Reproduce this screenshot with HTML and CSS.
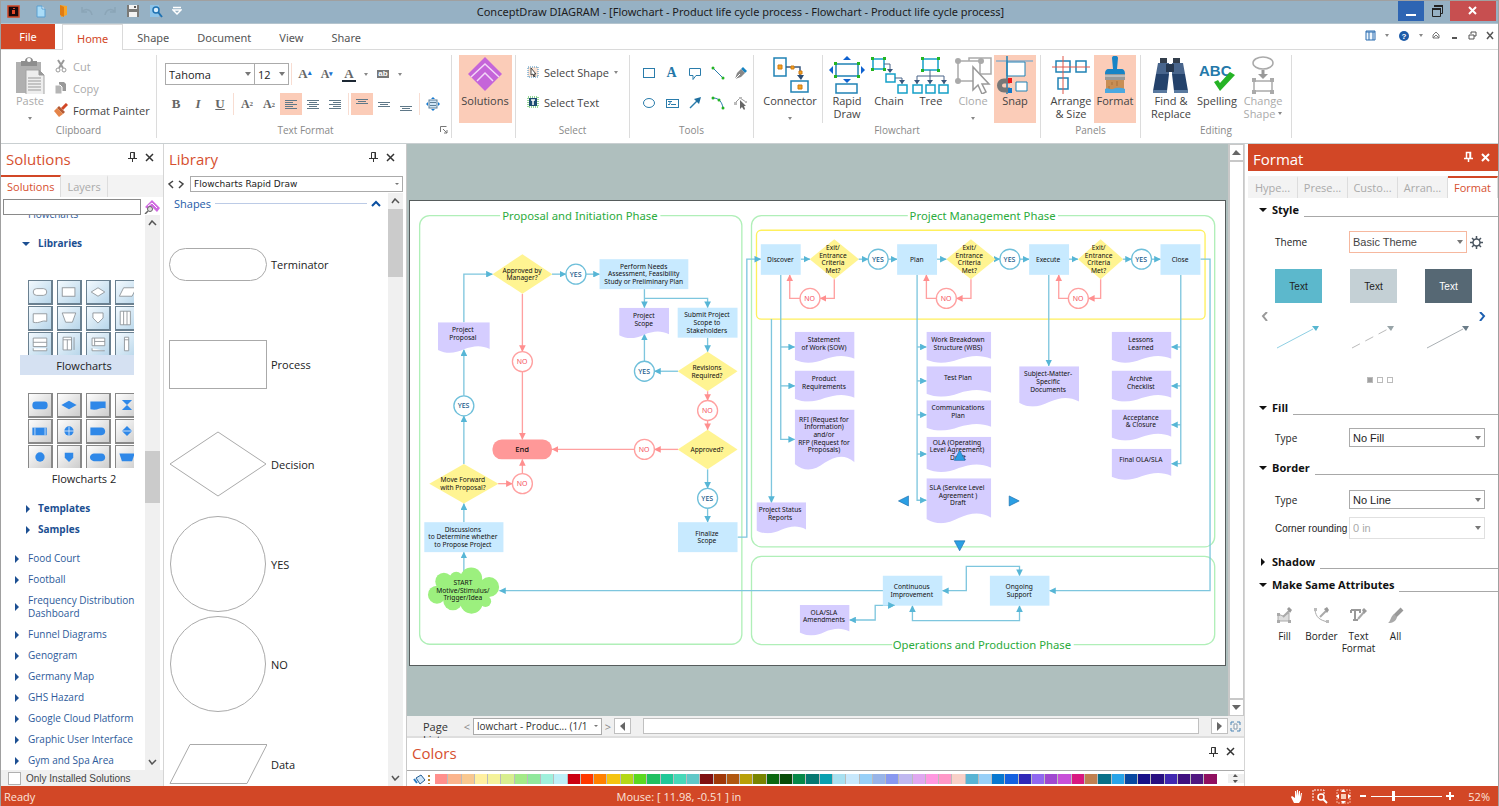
FILE: index.html
```
<!DOCTYPE html>
<html lang="en">
<head>
  <meta charset="UTF-8">
  <title>ConceptDraw DIAGRAM</title>
  <link rel="stylesheet" href="styles.css">
</head>
<body>
<div class="window">

  <!-- title bar -->
  <header class="titlebar">
    <div class="quick">
      <svg width="13" height="13"><rect x="1" y="1" width="11" height="11" fill="#1a0a0c" stroke="#d24726" stroke-width="1.5"/><path d="M5 5h3v4H5zM6 3h2v1H6z" fill="#e0482a"/></svg>
      <button aria-label="New"><svg width="14" height="14"><path d="M3 2h5l3 3v8H3z" fill="#a9dcf8" stroke="#5b9fd0"/><path d="M8 2v3h3" fill="#fff" stroke="#5b9fd0"/></svg></button>
      <button aria-label="Open"><svg width="14" height="14"><path d="M3 1l7 1v9l-6 2z" fill="#f7a428"/><path d="M3 1l4 2v10l-4-2z" fill="#e07b12"/></svg></button>
      <button aria-label="Undo"><svg width="14" height="14"><path d="M2 3v5h5M2 8c3-4 9-3 10 3" fill="none" stroke="#8ba5b7" stroke-width="1.5"/></svg></button>
      <button aria-label="Redo"><svg width="14" height="14"><path d="M12 3v5H7M12 8C9 4 3 5 2 11" fill="none" stroke="#8ba5b7" stroke-width="1.5"/></svg></button>
      <button aria-label="Save"><svg width="14" height="14"><path d="M1 1h12v12H1z" fill="#7a7a78"/><path d="M3 1h8v4H3zM3 8h8v5H3z" fill="#f3f3f3"/><path d="M8 2h2v2H8z" fill="#555"/></svg></button>
      <button aria-label="Preview"><svg width="14" height="14"><path d="M1 1h9v12H1z" fill="#8fc4e8"/><circle cx="7" cy="6" r="3" fill="#d7efff" stroke="#1f72b2" stroke-width="1.5"/><path d="M9 8l4 5" stroke="#1f72b2" stroke-width="2"/></svg></button>
      <button class="more" aria-label="Customize"><svg width="10" height="10"><path d="M1 1.5h8" stroke="#fff" stroke-width="1.5"/><path d="M1 4h8l-4 4z" fill="none" stroke="#fff" stroke-width="1.5"/></svg></button>
    </div>
    <h1>ConceptDraw DIAGRAM - [Flowchart - Product life cycle process - Flowchart - Product life cycle process]</h1>
    <div class="win-buttons">
      <button class="min" aria-label="Minimize"><svg width="12" height="12"><path d="M1 10h10" stroke="#fff" stroke-width="2"/></svg></button>
      <button class="restore" aria-label="Restore"><svg width="13" height="14"><path d="M3.5 3V1.5h8v8H10M1.500 4.500h8v8h-8z" fill="none" stroke="#222"/><path d="M1 5h9M3 2h9" stroke="#222" stroke-width="2"/></svg></button>
      <button class="close" aria-label="Close"><svg width="10" height="10"><path d="M1 1l7 7M8 1L1 8" stroke="#fff" stroke-width="2"/></svg></button>
    </div>
  </header>

  <!-- ribbon tabs -->
  <nav class="tabs">
    <button class="tab file">File</button>
    <button class="tab active">Home</button>
    <button class="tab">Shape</button>
    <button class="tab">Document</button>
    <button class="tab">View</button>
    <button class="tab">Share</button>
    <div class="tab-tools">
      <button aria-label="Layout"><svg width="11" height="11"><path d="M1 1h9v9H1z" fill="#eef6fd" stroke="#2b6cb0"/><path d="M1 2h9M4 2v8M8 2v8" stroke="#2b6cb0"/></svg></button>
      <i class="caret"></i>
      <button aria-label="Help"><svg width="12" height="12"><circle cx="6" cy="6" r="5" fill="#1c5ba8"/><text x="6" y="9" class="q">?</text></svg></button>
      <i class="caret"></i>
      <button aria-label="Collapse ribbon"><svg width="9" height="9"><path d="M1 4l3-3 3 3M1 7l3-3 3 3zM1 4v3M7 4v3" fill="none" stroke="#777"/></svg></button>
      <button aria-label="Minimize document"><svg width="9" height="9"><path d="M2 7h5" stroke="#555" stroke-width="2"/></svg></button>
      <button aria-label="Restore document"><svg width="9" height="9"><path d="M3 3V1h5v4H6M1 4h5v4H1z" fill="none" stroke="#555"/></svg></button>
      <button aria-label="Close document"><svg width="9" height="9"><path d="M1 1l6 7M7 1L1 8" stroke="#555" stroke-width="1.5"/></svg></button>
    </div>
  </nav>

  <!-- ribbon -->
  <section class="ribbon">
    <div class="group">
      <div class="group-body clipboard">
        <button class="big off"><svg width="34" height="40"><path d="M3 6h25v31H3z" fill="#b0b0b0"/><path d="M8 10V5h4c0-5 8-5 8 0h4v5z" fill="#8e8e8e"/><circle cx="16" cy="4" r="2" fill="#fff"/><path d="M13 14h13l5 5v20H13z" fill="#eee" stroke="#a5a5a5"/><path d="M26 14v5h5zM15 22h13M15 25h13M15 28h13M15 31h13M15 34h13" stroke="#999" fill="#999"/></svg>Paste<i class="caret"></i></button>
        <div class="stack">
          <button class="small off"><svg width="14" height="14"><path d="M4 1l5 8M10 1L5 9" stroke="#999" stroke-width="2"/><circle cx="4" cy="11" r="2" fill="none" stroke="#999"/><circle cx="10" cy="11" r="2" fill="none" stroke="#999"/></svg>Cut</button>
          <button class="small off"><svg width="14" height="14"><path d="M5 1h5l2 2v7H5z" fill="#999"/><path d="M1 4h5l2 2v7H1z" fill="#b5b5b5" stroke="#fff"/></svg>Copy</button>
          <button class="small"><svg width="14" height="14"><path d="M13 1L8 6" stroke="#d24726" stroke-width="3"/><path d="M5 3l6 6-2 2-6-6z" fill="#b45a35"/><path d="M3 5l6 6-4 3-5-6z" fill="#e58448"/></svg>Format Painter</button>
        </div>
      </div>
      <div class="group-name">Clipboard</div>
    </div>

    <div class="group">
      <div class="group-body text-format">
        <div class="row">
          <span class="drop font-name"><select aria-label="Font"><option>Tahoma</option></select></span>
          <span class="drop font-size"><select aria-label="Font size"><option>12</option></select></span>
          <i class="bar"></i>
          <button class="glyph serif" aria-label="Grow font">A<sup class="tick">▴</sup></button>
          <button class="glyph serif smaller" aria-label="Shrink font">A<sup class="tick">▾</sup></button>
          <button class="glyph serif colored" aria-label="Font color"><span>A</span></button>
          <i class="caret"></i>
          <button class="glyph" aria-label="Highlight"><span class="ab">ab</span></button>
          <i class="caret"></i>
        </div>
        <div class="row">
          <button class="glyph serif">B</button>
          <button class="glyph serif italic">I</button>
          <button class="glyph serif underline">U</button>
          <i class="bar"></i>
          <button class="glyph serif script">A<sup>2</sup></button>
          <button class="glyph serif script">A<sub>2</sub></button>
          <button class="glyph on" aria-label="Align left"><svg width="13" height="11"><path d="M0 1.5h12M0 3.5h8M0 5.5h12M0 7.5h8M0 9.5h12" stroke="#5f7888"/></svg></button>
          <button class="glyph" aria-label="Align center"><svg width="13" height="11"><path d="M0 1.5h12M2 3.5h8M0 5.5h12M2 7.5h8M0 9.5h12" stroke="#5f7888"/></svg></button>
          <button class="glyph" aria-label="Align right"><svg width="13" height="11"><path d="M0 1.5h12M4 3.5h8M0 5.5h12M4 7.5h8M0 9.5h12" stroke="#5f7888"/></svg></button>
          <i class="bar"></i>
          <button class="glyph on" aria-label="Align top"><svg width="13" height="13"><path d="M0 1.5h12M2 3.5h8M0 5.5h12" stroke="#5f7888"/></svg></button>
          <button class="glyph" aria-label="Align middle"><svg width="13" height="13"><path d="M0 4.5h12M2 6.5h8M0 8.5h12" stroke="#5f7888"/></svg></button>
          <button class="glyph" aria-label="Align bottom"><svg width="13" height="13"><path d="M0 8.5h12M2 10.500h8M0 12.500h12" stroke="#5f7888"/></svg></button>
          <i class="bar"></i>
          <button class="glyph" aria-label="Fit text"><svg width="14" height="14"><rect x="3" y="3" width="8" height="8" fill="#cfe5f6" stroke="#5d7f99"/><path d="M4 5.5h6M4 8.5h6" stroke="#5d7f99"/><path d="M5 2l2-2 2 2zM5 12l2 2 2-2zM2 5L0 7l2 2zM12 5l2 2-2 2z" fill="#1379d0"/></svg></button>
        </div>
      </div>
      <div class="group-name with-launch">Text Format<button class="launch" aria-label="Text format options"><svg width="8" height="8"><path d="M.5 6V.5h6M3 3l4 4M7 4v3H4" fill="none" stroke="#777"/></svg></button></div>
    </div>

    <div class="group">
      <div class="group-body centered">
        <button class="big on wide"><svg width="34" height="36"><path d="M17 1l17 17-17 17L0 18z" fill="#c565d9"/><path d="M3 21L17 8l14 13M9 25l8-8 8 8" fill="none" stroke="#f3d8f8" stroke-width="1.5"/></svg>Solutions</button>
      </div>
    </div>

    <div class="group">
      <div class="group-body select-group">
        <button class="small"><svg width="12" height="12"><rect x="1" y="1" width="10" height="10" fill="#fbe3d4" stroke="#3a8cc0" stroke-dasharray="1 1"/><path d="M4 2v7l2-1 1 3 1-1-1-2h2z" fill="#fff" stroke="#444"/></svg>Select Shape <i class="caret"></i></button>
        <button class="small"><svg width="12" height="12"><rect x="1" y="1" width="10" height="10" fill="#fff" stroke="#2aaa2a" stroke-dasharray="1 1"/><path d="M2 2h8v8H2z" fill="#1d4d72"/><path d="M4 4h4M6 4v5" stroke="#fff" stroke-width="1.5"/></svg>Select Text</button>
      </div>
      <div class="group-name">Select</div>
    </div>

    <div class="group">
      <div class="group-body tools">
        <button aria-label="Rectangle"><svg width="14" height="14"><rect x="1.5" y="2.5" width="11" height="9" fill="#fff" stroke="#2a7cab"/></svg></button>
        <button aria-label="Text" class="serif tool-a">A</button>
        <button aria-label="Callout"><svg width="14" height="14"><path d="M1.500 2.500h11v7H8l-3 4v-4H1.500z" fill="#fff" stroke="#2a7cab"/></svg></button>
        <button aria-label="Line"><svg width="14" height="14"><path d="M2 2l10 10" stroke="#2a7cab"/><circle cx="2" cy="2" r="1.5" fill="#25b325"/><circle cx="12" cy="12" r="1.5" fill="#25b325"/></svg></button>
        <button aria-label="Pen"><svg width="14" height="14"><path d="M9 1l4 4-2 2-4-4z" fill="#1483c2"/><path d="M7 3l4 4-4 4-6 2 2-6z" fill="#888"/><path d="M1 13l5-5" stroke="#fff"/></svg></button>
        <button aria-label="Ellipse"><svg width="14" height="14"><ellipse cx="7" cy="7" rx="5.5" ry="4.5" fill="#fff" stroke="#2a7cab"/></svg></button>
        <button aria-label="Text box"><svg width="14" height="14"><rect x="1.500" y="3.500" width="12" height="8" fill="#fff" stroke="#2a7cab"/><path d="M3 5.500h4M5 5v3M6 8.500h5M3 8.500h2" stroke="#2a7cab"/></svg></button>
        <button aria-label="Arrow"><svg width="14" height="14"><path d="M2 12l8-8" stroke="#2a7cab" stroke-width="1.5"/><path d="M13 1l-2 7-5-5z" fill="#1f6f9f"/></svg></button>
        <button aria-label="Arc"><svg width="14" height="14"><path d="M2 2c6 0 9 4 10 10" fill="none" stroke="#2a7cab"/><circle cx="2" cy="2" r="1.5" fill="#25b325"/><circle cx="8" cy="4" r="1.5" fill="#25b325"/><circle cx="12" cy="12" r="1.5" fill="#25b325"/></svg></button>
        <button aria-label="Edit points"><svg width="14" height="14"><path d="M1 7l5-5 6 4" fill="none" stroke="#999"/><path d="M0 6h3v3H0zM5 1h3v2H5zM11 5h2v2h-2z" fill="#bbb"/><path d="M6 4v9l2-2 2 3 1-1-1-3h2z" fill="#666"/></svg></button>
      </div>
      <div class="group-name">Tools</div>
    </div>

    <div class="group">
      <div class="group-body flow">
        <button class="big connector"><svg width="38" height="38"><path d="M3 2h12v18H3z" fill="#fff" stroke="#2182b5" stroke-width="1.5"/><path d="M20 25h17v11H20z" fill="#fff" stroke="#2182b5" stroke-width="1.5"/><path d="M15 11h14v9" fill="none" stroke="#3a5a80" stroke-width="1.5"/><path d="M26 19h7l-3 5z" fill="#2c4d75"/><path d="M7 9h4v4H7zM20 10h3v3h-3zM28 15h3v3h-3zM27 29h4v4h-4z" fill="#f4a321" stroke="#d07a10"/></svg>Connector<i class="caret"></i></button>
        <i class="divider"></i>
        <button class="big"><svg width="36" height="38"><path d="M7 8h22v12H7zM7 28h21v9H7z" fill="#fff" stroke="#2182b5" stroke-width="1.5"/><path d="M5 6h3v3H5zM28 6h3v3h-3zM5 19h3v3H5zM28 19h3v3h-3z" fill="#23b523"/><path d="M14 4l4-4 4 4zM14 23h8l-4 4zM4 10v8l-4-4zM32 10v8l4-4z" fill="#0f62d0"/></svg>Rapid<br>Draw</button>
        <button class="big"><svg width="38" height="38"><path d="M3 3h11v10H3zM16 18h9v8h-9zM28 29h9v8h-9z" fill="#fff" stroke="#14a0c8" stroke-width="1.5"/><path d="M14 8h6v8M25 22h7v6" fill="none" stroke="#4a6488"/><path d="M17 13h6l-3 4zM29 24h6l-3 4z" fill="#3a577c"/><path d="M1 1h3v3H1zM13 1h3v3h-3zM1 12h3v3H1zM13 12h3v3h-3z" fill="#23b523"/></svg>Chain</button>
        <button class="big"><svg width="38" height="38"><path d="M11 3h15v11H11zM1 29h9v8H1zM14 29h9v8h-9zM27 29h9v8h-9z" fill="#fff" stroke="#14a0c8" stroke-width="1.5"/><path d="M18 14v14M5 28v-8h27v8" fill="none" stroke="#4a6488"/><path d="M2 24h6l-3 4zM15 24h6l-3 4zM29 24h6l-3 4z" fill="#3a577c"/><path d="M9 1h3v3H9zM25 1h3v3h-3zM9 13h3v3H9zM25 13h3v3h-3z" fill="#23b523"/></svg>Tree</button>
        <button class="big off"><svg width="38" height="38"><path d="M15 2h22v16H15z" fill="#fff" stroke="#aaa" stroke-width="1.5"/><path d="M4 5h22v20H4z" fill="#fff" stroke="#aaa" stroke-width="1.5"/><g fill="#aaa"><circle cx="4" cy="5" r="3"/><circle cx="27" cy="5" r="3"/><circle cx="4" cy="25" r="3"/></g><path d="M19 11v23l5-5 4 9 4-2-4-8h7z" fill="#fff" stroke="#999" stroke-width="1.5"/></svg>Clone<i class="caret"></i></button>
        <button class="big on"><svg width="38" height="38"><path d="M11 6h18v14H11zM20 26h11v9H20z" fill="#fff" stroke="#2182b5"/><path d="M0 5h37" stroke="#5a9fcf"/><path d="M11 0v38" stroke="#2182b5" stroke-width="1.5"/><path d="M14 25H8c-6 0-6 9 0 9h6" fill="none" stroke="#777" stroke-width="5"/><path d="M12 22h4v5h-4z" fill="#f01818"/><path d="M12 32h4v5h-4z" fill="#1478c8"/></svg>Snap</button>
      </div>
      <div class="group-name">Flowchart</div>
    </div>

    <div class="group">
      <div class="group-body panels">
        <button class="big"><svg width="38" height="38"><path d="M4 5h14v11H4zM24 5h10v11H24zM6 22h10v11H6z" fill="#fff" stroke="#2182b5" stroke-width="1.5"/><path d="M0 11h38M11 0v38" stroke="#e0584a"/></svg>Arrange<br>&amp; Size</button>
        <button class="big on"><svg width="24" height="38"><path d="M9 2c0-3 6-3 6 0l-1 11h4c3 0 4 2 4 5H2c0-3 1-5 4-5h4z" fill="#1884c6"/><path d="M2 18h20v6H2z" fill="#999"/><path d="M2 20h20" stroke="#ddd"/><path d="M3 24h18v10H3z" fill="#c88e54"/><path d="M9 26v3M14 25v5M6 30v3" stroke="#a87038"/><path d="M2 33c3-2 5 1 8 0s6-2 12 0v4H2z" fill="#4aa8e0"/></svg>Format</button>
      </div>
      <div class="group-name">Panels</div>
    </div>

    <div class="group">
      <div class="group-body editing">
        <button class="big"><svg width="36" height="38"><path d="M7 2h7v5H7zM20 2h7v5h-7z" fill="#333e4c"/><path d="M5 7h11v11H3zM19 7h11l2 11H19z" fill="#48658c"/><path d="M13 8h8v8h-8z" fill="#263850"/><path d="M3 18h13l-2 17H0zM19 18h13l3 17H21z" fill="#24426b"/><path d="M0 34h14v3H0zM21 34h14v3H21z" fill="#5a7aa0"/></svg>Find &amp;<br>Replace</button>
        <button class="big"><svg width="40" height="38"><text x="2" y="20" class="abc">ABC</text><path d="M17 26l6 9 15-16-5-3-10 11-2-3z" fill="#25b325"/></svg>Spelling</button>
        <button class="big off"><svg width="30" height="38"><ellipse cx="15" cy="7" rx="10" ry="6" fill="#fff" stroke="#aaa" stroke-width="1.5"/><path d="M15 14v5" stroke="#999" stroke-width="3"/><path d="M10 18h10l-5 5z" fill="#999"/><path d="M6 25h18v10H6z" fill="#fff" stroke="#aaa" stroke-width="1.5"/><path d="M4 22h4v4H4zM22 22h4v4h-4zM4 34h4v4H4zM22 34h4v4h-4z" fill="#aaa"/></svg>Change<br><span class="inline">Shape<i class="caret"></i></span></button>
      </div>
      <div class="group-name">Editing</div>
    </div>
  </section>

  <main class="work">

    <!-- solutions panel -->
    <aside class="panel solutions">
      <div class="panel-head">
        <h2>Solutions</h2>
        <button aria-label="Pin"><svg width="9" height="12"><path d="M2.5 1.5h4v6h-4zM0 7.5h9M4.500 7v4" fill="none" stroke="#333"/><path d="M6 1v6" stroke="#333"/></svg></button>
        <button aria-label="Close"><svg width="9" height="9"><path d="M1 1l7 7M8 1L1 8" stroke="#333" stroke-width="1.5"/></svg></button>
      </div>
      <div class="panel-tabs">
        <button class="active">Solutions</button>
        <button>Layers</button>
      </div>
      <div class="search">
        <input type="text" aria-label="Search solutions">
        <button aria-label="Search"><svg width="16" height="14"><path d="M8 0l8 8-3 4-5-5-3 3-4-3z" fill="#cf6ae0"/><path d="M4 6l4-3 5 5" fill="none" stroke="#fff"/><circle cx="6" cy="9" r="2.5" fill="#ddd" stroke="#666"/><path d="M4 11l-3 3" stroke="#666" stroke-width="1.5"/></svg></button>
      </div>
      <div class="scroller">
        <div class="tree">
          <a href="#" class="cut-off">Flowcharts</a>
          <button class="branch open"><i></i>Libraries</button>

          <button class="thumb selected">
            <span class="tiles blue">
              <svg viewBox="0 0 26 26"><rect x="5" y="9" width="16" height="8" rx="4"/></svg>
              <svg viewBox="0 0 26 26"><rect x="5" y="8" width="15" height="10"/></svg>
              <svg viewBox="0 0 26 26"><path d="M13 8l8 5-8 5-8-5z"/></svg>
              <svg viewBox="0 0 26 26"><path d="M9 8h15l-5 10H4z"/></svg>
              <svg viewBox="0 0 26 26"><path d="M5 8h16v9c-6-2-8 3-16 1z"/></svg>
              <svg viewBox="0 0 26 26"><path d="M5 7h16l-4 11H9z"/></svg>
              <svg viewBox="0 0 26 26"><path d="M7 7h12v6l-6 6-6-6z"/></svg>
              <svg viewBox="0 0 26 26"><path d="M5 5h12v16H5zM9 5v16M13 5v16"/></svg>
              <svg viewBox="0 0 26 26"><path d="M5 6h16v10H5zM5 11h16M5 18v3h16v-3"/></svg>
              <svg viewBox="0 0 26 26"><path d="M6 5h10v15H6zM6 8h10M11 8v12M19 5v15"/></svg>
              <svg viewBox="0 0 26 26"><path d="M6 6h15v9H6zM9 6v9M9 10h12M6 18v3h15"/></svg>
              <svg viewBox="0 0 26 26"><path d="M10 5h5v16h-5zM10 8h5"/></svg>
            </span>
            <span class="caption">Flowcharts</span>
          </button>
          <button class="thumb">
            <span class="tiles gray">
              <svg viewBox="0 0 26 26"><rect x="4" y="9" width="18" height="9" rx="4"/></svg>
              <svg viewBox="0 0 26 26"><path d="M13 8l9 5-9 5-9-5z"/></svg>
              <svg viewBox="0 0 26 26"><path d="M4 9h18v8c-7-2-8 3-18 1z"/></svg>
              <svg viewBox="0 0 26 26"><path d="M7 7h12l-6 6 6 6H7l6-6z"/></svg>
              <svg viewBox="0 0 26 26"><path d="M4 9h17v9H4z"/><path class="cut" d="M7 9v9M19 9v9"/></svg>
              <svg viewBox="0 0 26 26"><circle cx="13" cy="13" r="5.5"/><path class="cut" d="M13 8v11M7 13h12"/></svg>
              <svg viewBox="0 0 26 26"><path d="M4 9h13c6 0 6 9 0 9H4z"/></svg>
              <svg viewBox="0 0 26 26"><path d="M13 7l6 6-6 6-6-6z"/><path class="cut" d="M7 13h12"/></svg>
              <svg viewBox="0 0 26 26"><circle cx="13" cy="13" r="5.5"/></svg>
              <svg viewBox="0 0 26 26"><path d="M8 8h10v6l-5 5-5-5z"/></svg>
              <svg viewBox="0 0 26 26"><path d="M8 9h9c6 0 6 9 0 9H8c-6-1-6-8 0-9z"/></svg>
              <svg viewBox="0 0 26 26"><path d="M4 9h18l-3 9H7z"/></svg>
            </span>
            <span class="caption">Flowcharts 2</span>
          </button>

          <button class="branch"><i></i>Templates</button>
          <button class="branch last"><i></i>Samples</button>
          <button class="leaf"><i></i>Food Court</button>
          <button class="leaf"><i></i>Football</button>
          <button class="leaf"><i></i>Frequency Distribution<br>Dashboard</button>
          <button class="leaf"><i></i>Funnel Diagrams</button>
          <button class="leaf"><i></i>Genogram</button>
          <button class="leaf"><i></i>Germany Map</button>
          <button class="leaf"><i></i>GHS Hazard</button>
          <button class="leaf"><i></i>Google Cloud Platform</button>
          <button class="leaf"><i></i>Graphic User Interface</button>
          <button class="leaf"><i></i>Gym and Spa Area</button>
        </div>
        <div class="vscroll">
          <svg width="9" height="6"><path d="M1 5l3-4 4 4" fill="none" stroke="#555" stroke-width="1.5"/></svg>
          <span class="thumb-mid"></span>
          <svg width="9" height="6"><path d="M1 1l3 4 4-4" fill="none" stroke="#555" stroke-width="1.5"/></svg>
        </div>
      </div>
      <label class="only"><input type="checkbox">Only Installed Solutions</label>
    </aside>

    <!-- library panel -->
    <aside class="panel library">
      <div class="panel-head">
        <h2>Library</h2>
        <button aria-label="Pin"><svg width="9" height="12"><path d="M2.5 1.5h4v6h-4zM0 7.5h9M4.500 7v4" fill="none" stroke="#333"/><path d="M6 1v6" stroke="#333"/></svg></button>
        <button aria-label="Close"><svg width="9" height="9"><path d="M1 1l7 7M8 1L1 8" stroke="#333" stroke-width="1.5"/></svg></button>
      </div>
      <div class="lib-nav">
        <button aria-label="Previous"><svg width="6" height="9"><path d="M5 1L1 4l4 4" fill="none" stroke="#444" stroke-width="1.5"/></svg></button>
        <button aria-label="Next"><svg width="6" height="9"><path d="M1 1l4 3-4 4" fill="none" stroke="#444" stroke-width="1.5"/></svg></button>
        <span class="drop lib-pick"><select aria-label="Library"><option>Flowcharts Rapid Draw</option></select></span>
      </div>
      <div class="scroller">
        <div class="shapes">
          <div class="shapes-head"><h3>Shapes</h3><hr><svg width="10" height="7"><path d="M1 6l4-4 4 4" fill="none" stroke="#0a4fa0" stroke-width="2"/></svg></div>
          <div class="shape"><svg width="98" height="98"><rect x="0.5" y="33.5" width="97" height="32" rx="16"/></svg>Terminator</div>
          <div class="shape"><svg width="98" height="98"><rect x="0.5" y="25.5" width="97" height="48"/></svg>Process</div>
          <div class="shape"><svg width="98" height="98"><path d="M49 17l48 32-48 32L1 49z"/></svg>Decision</div>
          <div class="shape"><svg width="98" height="98"><circle cx="49" cy="49" r="47.5"/></svg>YES</div>
          <div class="shape"><svg width="98" height="98"><circle cx="49" cy="49" r="47.5"/></svg>NO</div>
          <div class="shape"><svg width="98" height="98"><path d="M21 29.5h77L78 68.5H1z"/></svg>Data</div>
        </div>
        <div class="vscroll">
          <svg width="9" height="6"><path d="M1 5l3-4 4 4" fill="none" stroke="#555" stroke-width="1.5"/></svg>
          <span class="thumb-top"></span>
          <svg width="9" height="6"><path d="M1 1l3 4 4-4" fill="none" stroke="#555" stroke-width="1.5"/></svg>
        </div>
      </div>
    </aside>

    <!-- document -->
    <section class="document">
      <div class="view">
        <div class="canvas">
          <svg class="page" viewBox="3 15 2451 1395">
            <defs>
              <marker id="b" markerUnits="userSpaceOnUse" markerWidth="20" markerHeight="20" refX="19" refY="10" orient="auto-start-reverse"><path d="M0 0l20 10L0 20z" fill="#57b6d6"/></marker>
              <marker id="r" markerUnits="userSpaceOnUse" markerWidth="20" markerHeight="20" refX="19" refY="10" orient="auto-start-reverse"><path d="M0 0l20 10L0 20z" fill="#ff8f8f"/></marker>
              <symbol id="doc" viewBox="0 0 100 100" preserveAspectRatio="none"><path d="M0 0H100V87C82 72 66 78 50 88C34 100 18 105 0 90z"/></symbol>
            </defs>

            <!-- phase frames -->
            <g class="frame">
              <rect x="32" y="59" width="969" height="1289" rx="30"/>
              <rect x="1030" y="59" width="1393" height="996" rx="30"/>
              <rect x="1030" y="1084" width="1393" height="265" rx="30"/>
            </g>
            <rect class="stage" x="1045" y="103" width="1349" height="267" rx="14"/>
            <g class="mask"><rect x="274" y="40" width="482" height="40"/><rect x="1500" y="40" width="452" height="40"/><rect x="1453" y="1330" width="546" height="40"/></g>
            <g class="phase">
              <text x="514" y="72">Proposal and Initiation Phase</text>
              <text x="1725" y="72">Project Management Phase</text>
              <text x="1723" y="1361">Operations and Production Phase</text>
            </g>

            <!-- links -->
            <g class="link">
              <path d="M165 380V235H251"/><path d="M430 235H472"/><path d="M532 235H573"/>
              <path d="M708 280V336"/><path d="M708 308H898V336"/><path d="M898 426V468"/>
              <path d="M809 527H738"/><path d="M708 497V415"/>
              <path d="M165 806V661"/><path d="M165 601V462"/>
              <path d="M898 822V879"/><path d="M898 939V981"/>
              <path d="M165 1130V1071"/><path d="M165 981V925"/>
              <path d="M988 1026H1016V190H1058"/><path d="M1426 1187H272"/>
              <path d="M1178 190H1206"/><path d="M1352 190H1381"/><path d="M1441 190H1468"/>
              <path d="M1588 190H1616"/><path d="M1764 190H1777"/><path d="M1837 190H1865"/>
              <path d="M1985 190H2012"/><path d="M2147 190H2173"/><path d="M2233 190H2260"/>
              <path d="M1118 237V732H1160"/><path d="M1118 454H1160"/><path d="M1118 571H1160"/>
              <path d="M1090 370V922"/>
              <path d="M1528 237V915H1556"/><path d="M1528 454H1556"/><path d="M1528 556H1556"/><path d="M1528 658H1556"/><path d="M1528 776H1556"/>
              <path d="M1924 237V511"/>
              <path d="M2321 237V805H2293"/><path d="M2321 454H2293"/><path d="M2321 571H2293"/><path d="M2321 688H2293"/>
              <path d="M2380 190H2409V1187H1926"/>
            </g>
            <g class="link both">
              <path d="M1604 1187H1676V1114H1836V1142"/>
              <path d="M1514 1232V1277H1836V1232"/>
              <path d="M1325 1275H1402V1231H1460"/>
            </g>
            <g class="link no">
              <path d="M341 294V468"/><path d="M341 528V732"/><path d="M898 587V615"/><path d="M898 675V703"/>
              <path d="M809 762H738"/><path d="M678 762H430"/><path d="M268 865H311"/><path d="M341 835V792"/>
              <path d="M1279 250V308H1236"/><path d="M1176 308H1145V237"/>
              <path d="M1690 250V308H1646"/><path d="M1586 308H1556V237"/>
              <path d="M2080 250V308H2043"/><path d="M1983 308H1954V237"/>
            </g>

            <!-- steps -->
            <g class="step">
              <rect x="573" y="190" width="267" height="90"/><rect x="808" y="336" width="180" height="90"/>
              <rect x="809" y="981" width="179" height="90"/><rect x="46" y="981" width="238" height="90"/>
              <rect x="1058" y="145" width="120" height="92"/><rect x="1468" y="145" width="120" height="92"/>
              <rect x="1865" y="145" width="120" height="92"/><rect x="2260" y="145" width="120" height="92"/>
              <rect x="1425" y="1142" width="179" height="90"/><rect x="1747" y="1142" width="179" height="90"/>
            </g>
            <g class="link"><path d="M1440 1231H1460"/></g>
            <g class="decision">
              <path d="M341 175l90 60-90 59-90-59z"/><path d="M898 468l90 59-90 60-90-60z"/>
              <path d="M898 703l90 59-90 60-90-60z"/><path d="M165 806l104 59-104 60-104-60z"/>
              <path d="M1279 130l74 60-74 60-74-60z"/><path d="M1690 130l74 60-74 60-74-60z"/><path d="M2080 130l68 60-68 60-68-60z"/>
            </g>
            <g class="output">
              <use href="#doc" x="632" y="336" width="150" height="92"/><use href="#doc" x="87" y="380" width="156" height="92"/>
              <use href="#doc" x="1160" y="408" width="180" height="94"/><use href="#doc" x="1160" y="525" width="180" height="94"/>
              <use href="#doc" x="1160" y="642" width="180" height="182"/><use href="#doc" x="1045" y="921" width="149" height="94"/>
              <use href="#doc" x="1556" y="408" width="195" height="94"/><use href="#doc" x="1556" y="512" width="195" height="92"/>
              <use href="#doc" x="1556" y="614" width="195" height="92"/><use href="#doc" x="1556" y="724" width="195" height="107"/>
              <use href="#doc" x="1556" y="849" width="195" height="136"/><use href="#doc" x="1835" y="512" width="180" height="122"/>
              <use href="#doc" x="2113" y="408" width="180" height="94"/><use href="#doc" x="2113" y="525" width="180" height="94"/>
              <use href="#doc" x="2113" y="642" width="180" height="94"/><use href="#doc" x="2113" y="760" width="180" height="94"/>
              <use href="#doc" x="1175" y="1230" width="150" height="92"/>
            </g>
            <rect class="finish" x="251" y="732" width="179" height="60" rx="28"/>
            <g class="start">
              <circle cx="105" cy="1159" r="26"/><circle cx="142" cy="1150" r="20"/><circle cx="187" cy="1150" r="33"/><circle cx="241" cy="1176" r="30"/>
              <circle cx="84" cy="1199" r="27"/><circle cx="132" cy="1217" r="29"/><circle cx="188" cy="1222" r="34"/><circle cx="230" cy="1219" r="17"/>
              <ellipse cx="165" cy="1185" rx="84" ry="42"/>
            </g>

            <!-- answers -->
            <g class="yes">
              <circle cx="502" cy="235" r="30"/><circle cx="165" cy="631" r="30"/><circle cx="708" cy="527" r="30"/><circle cx="898" cy="909" r="30"/>
              <circle cx="1411" cy="190" r="30"/><circle cx="1807" cy="190" r="30"/><circle cx="2203" cy="190" r="30"/>
              <text x="501" y="243">YES</text><text x="164" y="639">YES</text><text x="707" y="535">YES</text><text x="897" y="917">YES</text>
              <text x="1410" y="198">YES</text><text x="1806" y="198">YES</text><text x="2202" y="198">YES</text>
            </g>
            <g class="no-mark">
              <circle cx="341" cy="498" r="30"/><circle cx="898" cy="645" r="30"/><circle cx="708" cy="762" r="30"/><circle cx="341" cy="865" r="30"/>
              <circle cx="1206" cy="308" r="30"/><circle cx="1616" cy="308" r="30"/><circle cx="2013" cy="308" r="30"/>
              <text x="340" y="506">NO</text><text x="897" y="653">NO</text><text x="707" y="770">NO</text><text x="340" y="873">NO</text>
              <text x="1205" y="316">NO</text><text x="1615" y="316">NO</text><text x="2012" y="316">NO</text>
            </g>

            <!-- captions -->
            <g class="note">
              <text y="231"><tspan x="340">Approved by</tspan><tspan x="340" dy="23">Manager?</tspan></text>
              <text y="219"><tspan x="706">Perform Needs</tspan><tspan x="706" dy="23">Assessment, Feasibility</tspan><tspan x="706" dy="23">Study or Preliminary Plan</tspan></text>
              <text y="367"><tspan x="706">Project</tspan><tspan x="706" dy="23">Scope</tspan></text>
              <text y="365"><tspan x="896">Submit Project</tspan><tspan x="896" dy="23">Scope to</tspan><tspan x="896" dy="23">Stakeholders</tspan></text>
              <text y="409"><tspan x="162">Project</tspan><tspan x="162" dy="23">Proposal</tspan></text>
              <text y="524"><tspan x="896">Revisions</tspan><tspan x="896" dy="23">Required?</tspan></text>
              <text x="896" y="769">Approved?</text>
              <text class="strong" x="340" y="769">End</text>
              <text y="860"><tspan x="162">Move Forward</tspan><tspan x="162" dy="23">with Proposal?</tspan></text>
              <text y="1010"><tspan x="162">Discussions</tspan><tspan x="162" dy="23">to Determine whether</tspan><tspan x="162" dy="23">to Propose Project</tspan></text>
              <text y="1170"><tspan x="162">START</tspan><tspan x="162" dy="23">Motive/Stimulus/</tspan><tspan x="162" dy="23">Trigger/Idea</tspan></text>
              <text y="1022"><tspan x="896">Finalize</tspan><tspan x="896" dy="23">Scope</tspan></text>
              <text x="1117" y="198">Discover</text><text x="1527" y="198">Plan</text><text x="1922" y="198">Execute</text><text x="2319" y="198">Close</text>
              <text y="163"><tspan x="1275">Exit/</tspan><tspan x="1275" dy="23">Entrance</tspan><tspan x="1275" dy="23">Criteria</tspan><tspan x="1275" dy="23">Met?</tspan></text>
              <text y="163"><tspan x="1685">Exit/</tspan><tspan x="1685" dy="23">Entrance</tspan><tspan x="1685" dy="23">Criteria</tspan><tspan x="1685" dy="23">Met?</tspan></text>
              <text y="163"><tspan x="2074">Exit/</tspan><tspan x="2074" dy="23">Entrance</tspan><tspan x="2074" dy="23">Criteria</tspan><tspan x="2074" dy="23">Met?</tspan></text>
              <text y="439"><tspan x="1248">Statement</tspan><tspan x="1248" dy="23">of Work (SOW)</tspan></text>
              <text y="556"><tspan x="1248">Product</tspan><tspan x="1248" dy="23">Requirements</tspan></text>
              <text y="679"><tspan x="1248">RFI (Request for</tspan><tspan x="1248" dy="23">Information)</tspan><tspan x="1248" dy="23">and/or</tspan><tspan x="1248" dy="23">RFP (Request for</tspan><tspan x="1248" dy="23">Proposals)</tspan></text>
              <text y="951"><tspan x="1116">Project Status</tspan><tspan x="1116" dy="23">Reports</tspan></text>
              <text y="439"><tspan x="1651">Work Breakdown</tspan><tspan x="1651" dy="23">Structure (WBS)</tspan></text>
              <text x="1651" y="554">Test Plan</text>
              <text y="645"><tspan x="1651">Communications</tspan><tspan x="1651" dy="23">Plan</tspan></text>
              <text y="748"><tspan x="1648">OLA (Operating</tspan><tspan x="1648" dy="23">Level Agreement)</tspan><tspan x="1651" dy="23">Draft</tspan></text>
              <text y="884"><tspan x="1648">SLA (Service Level</tspan><tspan x="1651" dy="23">Agreement )</tspan><tspan x="1651" dy="23">Draft</tspan></text>
              <text y="542"><tspan x="1922">Subject-Matter-</tspan><tspan x="1922" dy="23">Specific</tspan><tspan x="1922" dy="23">Documents</tspan></text>
              <text y="439"><tspan x="2201">Lessons</tspan><tspan x="2201" dy="23">Learned</tspan></text>
              <text y="556"><tspan x="2201">Archive</tspan><tspan x="2201" dy="23">Checklist</tspan></text>
              <text y="673"><tspan x="2201">Acceptance</tspan><tspan x="2201" dy="23">&amp; Closure</tspan></text>
              <text x="2201" y="801">Final OLA/SLA</text>
              <text y="1182"><tspan x="1512">Continuous</tspan><tspan x="1512" dy="23">Improvement</tspan></text>
              <text y="1182"><tspan x="1835">Ongoing</tspan><tspan x="1835" dy="23">Support</tspan></text>
              <text y="1259"><tspan x="1248">OLA/SLA</tspan><tspan x="1248" dy="23">Amendments</tspan></text>
            </g>

            <!-- rapid draw handles -->
            <g class="handle">
              <path d="M1656 765l16 30h-32z"/><path d="M1472 917l30-15v30z"/><path d="M1835 917l-30-15v30z"/><path d="M1656 1067l-16-30h32z"/>
            </g>
          </svg>
        </div>
        <div class="doc-scroll">
          <button aria-label="Scroll up"><svg width="9" height="6"><path d="M0 5l4-5 5 5z" fill="#666"/></svg></button>
          <span></span>
          <button aria-label="Scroll down"><svg width="9" height="6"><path d="M0 0h9L4 5z" fill="#666"/></svg></button>
        </div>
      </div>
      <div class="pages">
        <label for="pageList">Page List:</label>
        <button aria-label="Previous page">&lt;</button>
        <span class="drop page-pick"><select id="pageList"><option>lowchart - Produc... (1/1</option></select></span>
        <button aria-label="Next page">&gt;</button>
        <button class="boxed" aria-label="Scroll left"><svg width="6" height="9"><path d="M5 0v9L0 4z" fill="#666"/></svg></button>
        <span class="track"></span>
        <button class="boxed" aria-label="Scroll right"><svg width="6" height="9"><path d="M0 0v9l5-5z" fill="#666"/></svg></button>
        <button class="fit" aria-label="Fit page"><svg width="11" height="11"><path d="M1 4V1h3M7 1h3v3M10 7v3H7M4 10H1V7" fill="none" stroke="#4a84b5"/><path d="M4 3h3v5H4z" fill="#fff" stroke="#89a"/></svg></button>
      </div>

      <!-- colors panel -->
      <div class="panel-head colors-head">
        <h2>Colors</h2>
        <button aria-label="Pin"><svg width="9" height="12"><path d="M2.5 1.5h4v6h-4zM0 7.5h9M4.500 7v4" fill="none" stroke="#333"/><path d="M6 1v6" stroke="#333"/></svg></button>
        <button aria-label="Close"><svg width="9" height="9"><path d="M1 1l7 7M8 1L1 8" stroke="#333" stroke-width="1.5"/></svg></button>
      </div>
      <div class="colors">
        <button class="bucket" aria-label="Fill color"><svg width="20" height="11"><path d="M3 4l5-3 4 5-5 4z" fill="#cfe6f8" stroke="#245e94"/><path d="M1 5l3 4" stroke="#2779c0" stroke-width="2"/><path d="M16 1v2M16 5v2M16 9v1" stroke="#b08030" stroke-width="2"/></svg></button>
        <div class="swatches">
          <i style="background:#ff8f8c"></i><i style="background:#fbb48c"></i><i style="background:#f8c890"></i><i style="background:#fff0a0"></i><i style="background:#f4f29a"></i><i style="background:#d8ee90"></i><i style="background:#a4ea88"></i><i style="background:#90e89c"></i><i style="background:#a0f0dc"></i><i style="background:#bdf0f8"></i>
          <i style="background:#cc0010"></i><i style="background:#ff3800"></i><i style="background:#ff8000"></i><i style="background:#f4c410"></i><i style="background:#b4d818"></i><i style="background:#5cd820"></i><i style="background:#20c060"></i><i style="background:#20c898"></i><i style="background:#48d8b8"></i><i style="background:#60c8c8"></i>
          <i style="background:#801010"></i><i style="background:#a03808"></i><i style="background:#b05810"></i><i style="background:#b8a008"></i><i style="background:#788400"></i><i style="background:#0c6810"></i><i style="background:#084c08"></i><i style="background:#088848"></i><i style="background:#087870"></i><i style="background:#08a0b0"></i>
          <i style="background:#a8e0f0"></i><i style="background:#c8e8fc"></i><i style="background:#98d0f8"></i><i style="background:#98b4e8"></i><i style="background:#8898f0"></i><i style="background:#c0b8f0"></i><i style="background:#e0a8f0"></i><i style="background:#ff98e0"></i><i style="background:#ff98c8"></i><i style="background:#f8d0c8"></i>
          <i style="background:#58b4d4"></i><i style="background:#98d0f8"></i><i style="background:#0878d0"></i><i style="background:#1460e0"></i><i style="background:#3028b8"></i><i style="background:#9068f0"></i><i style="background:#a048d0"></i><i style="background:#c850d8"></i><i style="background:#d81880"></i><i style="background:#c08050"></i>
          <i style="background:#087088"></i><i style="background:#28a4e8"></i><i style="background:#0848a0"></i><i style="background:#181088"></i><i style="background:#281080"></i><i style="background:#4028b0"></i><i style="background:#401080"></i><i style="background:#501880"></i><i style="background:#901060"></i>
        </div>
        <button class="spin" aria-label="More colors"><svg width="7" height="9"><path d="M1 3l2-3 3 3zM1 6l2 3 3-3z" fill="#555"/></svg></button>
      </div>
    </section>

    <!-- format panel -->
    <aside class="panel format">
      <div class="panel-head red">
        <h2>Format</h2>
        <button aria-label="Pin"><svg width="9" height="12"><path d="M2.500 1.500h4v6h-4zM0 7.500h9M4.500 7v4M6 1v6" fill="none" stroke="#fff" stroke-width="1.5"/></svg></button>
        <button aria-label="Close"><svg width="9" height="9"><path d="M1 1l7 7M8 1L1 8" stroke="#fff" stroke-width="2"/></svg></button>
      </div>
      <div class="panel-tabs five">
        <button>Hype...</button><button>Prese...</button><button>Custo...</button><button>Arran...</button><button class="active">Format</button>
      </div>

      <div class="sec open"><i></i><h3>Style</h3><hr></div>
      <div class="field theme"><label for="theme">Theme</label><span class="drop"><select id="theme"><option>Basic Theme</option></select></span>
        <button aria-label="Theme settings"><svg width="13" height="13"><circle cx="6.5" cy="6.5" r="3.5" fill="none" stroke="#4a5560" stroke-width="1.5"/><path d="M6.500 0v3M6.500 10v3M0 6.500h3M10 6.500h3M2 2l2 2M9 9l2 2M11 2L9 4M4 9l-2 2" stroke="#4a5560" stroke-width="1.5"/></svg></button>
      </div>
      <div class="gallery">
        <button aria-label="Previous styles"><svg width="7" height="9"><path d="M6 0L2 4l4 5" fill="none" stroke="#999" stroke-width="2"/></svg></button>
        <div class="styles">
          <button class="teal">Text</button><button class="silver">Text</button><button class="slate">Text</button>
          <svg width="47" height="26"><path d="M2 24L38 5" stroke="#8fd0e4"/><path d="M44 2l-3 5-4-5z" fill="#57b6d0"/></svg>
          <svg width="47" height="26"><path d="M2 24L38 5" stroke="#bbb" stroke-dasharray="9 6"/><path d="M44 2l-3 5-4-5z" fill="#98a4a8"/></svg>
          <svg width="47" height="26"><path d="M2 24L38 5" stroke="#aab0b4"/><path d="M44 2l-3 5-4-5z" fill="#6a7c88"/></svg>
        </div>
        <button aria-label="Next styles"><svg width="7" height="9"><path d="M1 0l4 4-4 5" fill="none" stroke="#1c5fb0" stroke-width="2"/></svg></button>
      </div>
      <div class="dots"><i class="now"></i><i></i><i></i></div>

      <div class="sec open"><i></i><h3>Fill</h3><hr></div>
      <div class="field"><label for="fillType">Type</label><span class="drop"><select id="fillType"><option>No Fill</option></select></span></div>
      <div class="sec open"><i></i><h3>Border</h3><hr></div>
      <div class="field border-type"><label for="lineType">Type</label><span class="drop"><select id="lineType"><option>No Line</option></select></span></div>
      <div class="field rounding"><label for="corner">Corner rounding</label><span class="drop"><select id="corner" disabled><option>0 in</option></select></span></div>
      <div class="sec"><i></i><h3>Shadow</h3><hr></div>
      <div class="sec open"><i></i><h3>Make Same Attributes</h3><hr></div>
      <div class="same">
        <button><svg width="17" height="17"><path d="M2 7l5 2 6-3v8H2z" fill="#ddd" stroke="#aaa"/><path d="M1 6h3v3H1zM12 13h3v3h-3zM1 13h3v3H1z" fill="#aaa"/><path d="M7 10l6-6" stroke="#aaa" stroke-width="2"/><path d="M11 2l2-2 3 3-2 3z" fill="#999"/></svg>Fill</button>
        <button><svg width="17" height="17"><path d="M2 3c1 7 4 10 13 12" fill="none" stroke="#aaa"/><path d="M1 1h3v3H1zM13 13h3v3h-3z" fill="#bbb"/><path d="M7 10l6-6" stroke="#aaa" stroke-width="2"/><path d="M11 2l3-2 2 3-2 3z" fill="#999"/></svg>Border</button>
        <button><svg width="17" height="17"><path d="M1 3h9v3M5 3v10M3 13h5M1 3v3" fill="none" stroke="#999" stroke-width="2"/><path d="M8 12l6-7" stroke="#aaa" stroke-width="2"/><path d="M12 3l2-2 3 3-3 3z" fill="#999"/></svg>Text<br>Format</button>
        <button><svg width="17" height="17"><path d="M15 2L8 9" stroke="#999" stroke-width="4"/><path d="M7 7l3 3c-1 4-4 6-9 6 3-2 2-6 6-9z" fill="#aaa"/></svg>All</button>
      </div>
    </aside>
  </main>

  <!-- status bar -->
  <footer class="status">
    <span class="ready">Ready</span>
    <span class="mouse">Mouse: [ 11.98, -0.51 ] in</span>
    <div class="zoom">
      <button aria-label="Pan"><svg width="13" height="15"><path d="M3 14l-3-6 1-1 3 2V2h1v5l1-6h1v6l1-5h1v6l1-4h1l-1 7-2 3z" fill="#fff"/></svg></button>
      <button aria-label="Zoom area"><svg width="16" height="15"><path d="M1 12V1h11v4" fill="none" stroke="#fff" stroke-dasharray="2 1"/><circle cx="9" cy="8" r="3" fill="none" stroke="#fff" stroke-width="1.5"/><path d="M11 10l4 4" stroke="#fff" stroke-width="2"/></svg></button>
      <button aria-label="Fit"><svg width="15" height="15"><rect x="1" y="1" width="13" height="13" fill="none" stroke="#f5b5a0" stroke-dasharray="2 1"/><path d="M5 5h5v5H5z" fill="#f8cdb8"/><path d="M5 3l2-3 3 3zM5 12l2 3 3-3zM3 5L0 7l3 3zM12 5l3 2-3 3z" fill="#fff"/></svg></button>
      <button class="pm" aria-label="Zoom out"><svg width="8" height="8"><path d="M1 4h6" stroke="#fff" stroke-width="2"/></svg></button>
      <input type="range" aria-label="Zoom" min="0" max="100" value="30">
      <button class="pm" aria-label="Zoom in"><svg width="8" height="8"><path d="M0 4h8M4 0v8" stroke="#fff" stroke-width="2"/></svg></button>
      <span class="percent">52%</span>
    </div>
  </footer>
</div>
</body>
</html>
```
FILE: styles.css
```
/* base */
* {
  box-sizing: border-box;
}
body {
  margin: 0;
  font-family: "Open Sans", "Noto Sans", sans-serif;
  font-size: 11px;
  color: #444;
  background: #fff;
}
h1, h2, h3 {
  margin: 0;
  font-weight: 400;
}
button {
  padding: 0;
  border: none;
  background: none;
  font: inherit;
  color: inherit;
  cursor: pointer;
}
svg {
  display: block;
  flex: none;
}
hr {
  flex: 1;
  margin: 0;
  border: none;
  border-top: 1px solid #a8a8a8;
}
.window {
  display: flex;
  flex-direction: column;
  height: 100vh;
  overflow: hidden;
  border-top: 1px solid #a0a0a0;
  border-left: 1px solid #a0a0a0;
  border-right: 1px solid #a0a0a0;
}
.caret {
  flex: none;
  border: 2px solid transparent;
  border-top: 3px solid #888;
  border-bottom: none;
}
.serif {
  font-family: "Liberation Serif", serif;
  font-weight: 700;
}

/* drop-downs */
.drop {
  display: inline-grid;
  align-items: center;
  background: #fff;
  border: 1px solid #ababab;
}
.drop select {
  grid-area: 1 / 1;
  width: 100%;
  height: 100%;
  padding: 0 0 0 3px;
  border: none;
  background: none;
  font: inherit;
  color: inherit;
  opacity: 1;
  appearance: none;
}
.drop::after {
  content: "";
  grid-area: 1 / 1;
  justify-self: end;
  margin-right: 3px;
  border: 3px solid transparent;
  border-top: 4px solid #777;
  border-bottom: none;
  pointer-events: none;
}

/* title bar */
.titlebar {
  display: grid;
  grid-template-columns: 1fr auto 1fr;
  height: 23px;
  flex: none;
  background: #96b1c4;
  border-bottom: 1px solid #b4c4ce;
}
.titlebar h1 {
  margin-right: 18px;
  font-family: "Noto Sans", sans-serif;
  font-size: 11px;
  line-height: 22px;
  color: #1c1c1c;
  white-space: nowrap;
}
.quick {
  display: flex;
  align-items: center;
  gap: 9px;
  padding: 0 0 2px 6px;
}
.quick > svg {
  margin-right: 5px;
}
.win-buttons {
  display: flex;
  justify-content: flex-end;
  align-items: flex-start;
  padding-right: 2px;
}
.win-buttons button {
  display: grid;
  place-items: center;
  width: 26px;
  height: 20px;
}
.win-buttons .min {
  background: #2e65b3;
}
.win-buttons .close {
  width: 46px;
  background: #c74f50;
}

/* ribbon tabs */
.tabs {
  display: flex;
  flex: none;
  height: 26px;
  border-bottom: 1px solid #dadada;
}
.tab {
  padding: 2px 14px 0;
  font-family: "Noto Sans", sans-serif;
  font-size: 11px;
  color: #555;
}
.tab.file {
  width: 54px;
  margin-right: 7px;
  padding: 0;
  background: #d24726;
  color: #fff;
}
.tab.active {
  margin-bottom: -1px;
  padding: 1px 14px 0;
  background: #fff;
  border: 1px solid #dadada;
  border-bottom: none;
  color: #d24726;
}
.tab-tools {
  display: flex;
  align-items: center;
  gap: 9px;
  margin-left: auto;
  padding: 0 3px 2px 0;
}
.q {
  font: bold 8px "Liberation Sans", sans-serif;
  fill: #fff;
  text-anchor: middle;
}

/* ribbon */
.ribbon {
  display: grid;
  grid-template-columns: 156px 295px 64px 114px 124px 287px 100px 151px;
  flex: none;
  height: 94px;
  padding: 5px 0;
  border-bottom: 1px solid #c9cfd1;
}
.group {
  display: flex;
  flex-direction: column;
  border-right: 1px solid #dcdcdc;
}
.group-body {
  display: flex;
  height: 68px;
}
.group-name {
  font-size: 10px;
  line-height: 14px;
  text-align: center;
  color: #888;
}
.with-launch {
  display: grid;
  grid-template-columns: 1fr auto;
  align-items: center;
  padding-left: 14px;
}
.launch {
  margin-right: 3px;
}
.big {
  display: flex;
  flex-direction: column;
  align-items: center;
  width: 42px;
  height: 68px;
  line-height: 13px;
  white-space: nowrap;
}
.big svg {
  height: 38px;
  margin-top: 1px;
}
.big > .caret {
  margin-top: 10px;
}
.big.wide {
  width: 53px;
}
.on {
  background: #fbccb8;
}
.off {
  color: #aaa;
}
.small {
  display: flex;
  align-items: center;
  gap: 5px;
  height: 22px;
}
.clipboard {
  padding-left: 8px;
}
.stack {
  display: flex;
  flex-direction: column;
  margin-left: 3px;
}
.stack .small {
  gap: 5px;
}
.text-format {
  flex-direction: column;
  gap: 8px;
  padding: 8px 0 0 8px;
}
.row {
  display: flex;
  align-items: center;
  height: 22px;
}
.row > .caret {
  margin: 0 4px;
}
.bar {
  width: 1px;
  height: 22px;
  margin: 0 2px;
  background: #f8ddd2;
}
.font-name,
.font-size {
  height: 22px;
  font-size: 11px;
  color: #222;
}
.font-name {
  width: 90px;
}
.font-size {
  width: 35px;
  margin-left: -1px;
}
.glyph {
  display: grid;
  grid-auto-flow: column;
  place-content: center;
  align-items: center;
  width: 22px;
  height: 22px;
  font-size: 13px;
  color: #666;
}
.row .glyph.smaller {
  font-size: 12px;
}
.glyph.italic {
  font-style: italic;
}
.glyph.underline {
  text-decoration: underline;
}
.glyph sup,
.glyph sub {
  font-size: 7px;
  line-height: 14px;
}
.glyph sup {
  align-self: start;
}
.glyph sub {
  align-self: end;
}
.glyph .tick {
  color: #1a73d0;
}
.colored span {
  padding: 0 2px;
  line-height: 13px;
  border-bottom: 2px solid #1c2733;
}
.ab {
  padding: 0 1px;
  background: #777;
  font: bold 8px/8px "Liberation Sans", sans-serif;
  color: #fff;
}
.row .glyph.script {
  font-size: 12px;
}
.centered {
  justify-content: center;
  padding-left: 3px;
}
.select-group {
  flex-direction: column;
  gap: 8px;
  padding: 6px 0 0 11px;
}
.tools {
  display: grid;
  grid-template-columns: repeat(5, 23px);
  grid-auto-rows: 30px;
  padding: 3px 0 0 7px;
}
.tools button {
  display: grid;
  place-items: center;
}
.tool-a {
  font-size: 14px;
  color: #2577a8;
}
.flow {
  padding-left: 4px;
}
.connector {
  width: 64px;
}
.divider {
  width: 1px;
  margin-right: 3px;
  background: #dcdcdc;
}
.panels {
  padding-left: 9px;
}
.panels .on {
  margin-left: 2px;
}
.editing {
  padding-left: 7px;
}
.editing .big {
  width: 46px;
}
.inline {
  display: flex;
  align-items: center;
  gap: 3px;
}
.abc {
  font: bold 15px "Liberation Sans", sans-serif;
  fill: #2479aa;
}

/* panels */
.work {
  display: flex;
  flex: 1;
  min-height: 0;
}
.panel {
  display: flex;
  flex-direction: column;
  flex: none;
  background: #fff;
}
.panel-head {
  display: flex;
  align-items: center;
  gap: 8px;
  flex: none;
  height: 31px;
  padding: 0 9px 0 5px;
}
.panel-head h2 {
  flex: 1;
  font-size: 15px;
  line-height: 28px;
  margin-bottom: 2px;
  color: #d6502f;
}
.panel-head button {
  margin-bottom: 5px;
}
.panel-tabs {
  display: flex;
  flex: none;
  height: 22px;
  background: #f3f3f3;
}
.panel-tabs button {
  padding: 0 6px 2px;
  border-top: 2px solid transparent;
  border-right: 1px solid #ddd;
  color: #aaa;
}
.panel-tabs .active {
  background: #fff;
  border-top-color: #d24726;
  color: #d6502f;
}
.solutions {
  width: 163px;
  border-right: 1px solid #d5d5d5;
}
.library {
  width: 243px;
  padding-left: 2px;
  border-right: 1px solid #c8c8c8;
}
.library .panel-head {
  padding: 0 11px 0 3px;
}
.search {
  display: flex;
  align-items: center;
  gap: 3px;
  flex: none;
  padding: 2px 2px 0;
}
.search input {
  width: 138px;
  height: 16px;
  border: 1px solid #8a8a8a;
}
.scroller {
  display: flex;
  flex: 1;
  min-height: 0;
}
.vscroll {
  display: flex;
  flex-direction: column;
  align-items: center;
  justify-content: space-between;
  width: 15px;
  margin-right: 3px;
  padding: 5px 0;
  background: #f0f0f0;
}
.vscroll span {
  width: 100%;
  background: #cbcbcb;
}
.thumb-mid {
  height: 52px;
  margin: 220px 0 252px;
}
.thumb-top {
  height: 68px;
  margin: 5px 0 auto;
}

/* solutions tree */
.tree {
  display: flex;
  flex-direction: column;
  flex: 1;
  overflow: hidden;
  font-size: 10px;
  color: #2d5a9a;
}
.cut-off {
  flex: none;
  height: 12px;
  margin: -7px 0 13px 27px;
  line-height: 12px;
  color: inherit;
  text-decoration: none;
}
.branch,
.leaf {
  display: flex;
  align-items: center;
  flex: none;
  min-height: 21px;
  line-height: 13px;
  text-align: left;
}
.branch {
  gap: 8px;
  padding-left: 25px;
  font-weight: 700;
  color: #1c4f92;
}
.branch.last {
  margin-bottom: 8px;
}
.leaf {
  gap: 9px;
  padding: 4px 0 4px 14px;
}
.branch i,
.leaf i {
  border: 4px solid transparent;
  border-left-color: #1c4f92;
  border-right: none;
}
.branch.open {
  padding-left: 21px;
}
.branch.open i {
  border: 4px solid transparent;
  border-top-color: #1c4f92;
  border-bottom: none;
}
.thumb {
  flex: none;
  margin: 26px 11px 0 19px;
  overflow: hidden;
}
.thumb + .thumb {
  margin: 18px 11px 10px 19px;
}
.tiles {
  display: grid;
  grid-template-columns: repeat(4, 25px);
  gap: 1px 4px;
  height: 75px;
  padding-left: 8px;
  overflow: hidden;
}
.tiles svg {
  width: 25px;
  height: 25px;
  border: 1px solid #6a8090;
  border-width: 1px 2px 2px 1px;
}
.blue svg {
  background: linear-gradient(135deg, #f2f9fe, #b8d6ea);
  fill: #fff;
  stroke: #8a8f94;
}
.gray svg {
  background: linear-gradient(135deg, #fdfdfd, #cdcdcd);
  border-color: #888;
  fill: #2f88e8;
}
.cut {
  stroke: #dceafa;
}
.caption {
  display: block;
  height: 20px;
  padding-left: 14px;
  font-size: 11px;
  line-height: 22px;
  text-align: center;
  color: #222;
}
.selected .caption {
  background: #d5e1f2;
}
.only {
  display: flex;
  align-items: center;
  gap: 5px;
  flex: none;
  height: 16px;
  padding-left: 7px;
  background: #f0f0f0;
  font: 10px "Liberation Sans", sans-serif;
}
.only input {
  width: 13px;
  height: 13px;
  margin: 0;
  background: #fff;
  border: 1px solid #b0b0b0;
  appearance: none;
}

/* library */
.lib-nav {
  display: flex;
  align-items: center;
  gap: 4px;
  flex: none;
  padding: 1px 0 1px 2px;
}
.lib-pick {
  flex: 1;
  height: 16px;
  margin: 0 3px 0 2px;
  font: 9px "DejaVu Sans", sans-serif;
  color: #222;
}
.lib-pick::after {
  border-width: 2px;
}
.shapes {
  flex: 1;
  overflow: hidden;
  padding-left: 3px;
}
.shapes-head {
  display: flex;
  align-items: center;
  gap: 4px;
  height: 21px;
  padding: 0 7px 0 5px;
}
.shapes-head h3 {
  font-size: 11px;
  color: #1c5ba8;
}
.shapes-head hr {
  border-color: #bccbe6;
}
.shape {
  display: flex;
  align-items: center;
  gap: 4px;
  height: 100px;
  color: #222;
}
.shape svg {
  fill: #fff;
  stroke: #aaa;
}

/* document */
.document {
  display: flex;
  flex-direction: column;
  flex: 1;
  min-width: 0;
  background: #f0f0f0;
}
.view {
  display: flex;
  flex: 1;
  min-height: 0;
}
.canvas {
  flex: 1;
  padding: 56px 2px 0;
  background: #afbfbe;
  overflow: hidden;
}
.page {
  width: 100%;
  background: #fff;
  border: 1px solid #565c5c;
}
.doc-scroll {
  display: flex;
  flex-direction: column;
  width: 16px;
  border-left: 1px solid #c8c8c8;
}
.doc-scroll span {
  flex: 1;
  background: #fff;
  border: 1px solid #c8c8c8;
}
.doc-scroll button {
  display: grid;
  place-items: center;
  height: 17px;
  background: #fff;
  border: 1px solid #c8c8c8;
}
.pages {
  display: flex;
  align-items: center;
  flex: none;
  height: 22px;
  border-bottom: 2px solid #dedede;
  color: #333;
}
.pages label {
  align-self: flex-start;
  width: 28px;
  height: 18px;
  margin: 4px 10px 0 16px;
  line-height: 13px;
  overflow: hidden;
}
.pages button {
  width: 12px;
  color: #888;
}
.page-pick {
  width: 129px;
  height: 17px;
  font-size: 10px;
}
.page-pick::after {
  border-width: 2px;
}
.pages .boxed {
  display: grid;
  place-items: center;
  width: 17px;
  height: 16px;
  background: #fff;
  border: 1px solid #c0c0c0;
}
.track {
  flex: 1;
  height: 16px;
  margin: 0 12px;
  background: #fff;
  border: 1px solid #c0c0c0;
}
.pages .fit {
  width: 16px;
  padding-left: 2px;
}
.colors-head {
  height: 32px;
  background: #fff;
}
.colors {
  display: flex;
  align-items: center;
  flex: none;
  height: 16px;
  background: #fff;
  border-top: 1px solid #aaa;
}
.bucket {
  padding: 1px 2px 0 6px;
}
.swatches {
  display: flex;
  flex: 1;
  gap: 1px;
  background: #bbb;
}
.swatches i {
  flex: 1;
  height: 10px;
}
.spin {
  width: 16px;
  margin-left: 11px;
  padding-left: 4px;
  background: #f0f0f0;
}

/* flowchart */
.frame rect {
  fill: none;
  stroke: #b0efb8;
  stroke-width: 4;
}
.stage {
  fill: none;
  stroke: #fff05c;
  stroke-width: 4;
}
.mask rect {
  fill: #fff;
}
.phase text {
  font: 34px "Noto Sans", sans-serif;
  fill: #2bab3c;
  text-anchor: middle;
}
.link path {
  fill: none;
  stroke: #7ec6de;
  stroke-width: 4;
  marker-end: url(#b);
}
.both path {
  marker-start: url(#b);
}
.link.no path {
  stroke: #ffa0a0;
  marker-end: url(#r);
}
.step rect {
  fill: #c8eaff;
}
.decision path {
  fill: #fff492;
}
.output use {
  fill: #d5cdff;
}
.finish {
  fill: #ff9898;
}
.start {
  fill: #9cf07e;
}
.yes circle,
.no-mark circle {
  fill: #fff;
  stroke: #6ebfda;
  stroke-width: 4;
}
.no-mark circle {
  stroke: #ffa0a0;
}
.note text,
.yes text,
.no-mark text {
  font: 20px "Noto Sans", sans-serif;
  fill: #111;
  text-anchor: middle;
}
.yes text {
  font-size: 21px;
  font-weight: 500;
  fill: #17598a;
}
.no-mark text {
  font-size: 21px;
  fill: #f5505c;
}
.note .strong {
  font-size: 23px;
  font-weight: 500;
}
.handle path {
  fill: #2a9fe4;
  stroke: #1c6fae;
  stroke-width: 2;
}

/* format panel */
.format {
  width: 254px;
  padding-left: 3px;
  border-left: 1px solid #d5d5d5;
  color: #222;
}
.panel-head.red {
  height: 27px;
  margin-bottom: 5px;
  padding-right: 8px;
  background: #d24726;
}
.red h2 {
  margin: 2px 0 0;
  color: #fff;
}
.panel-head.red button {
  margin: 0 0 1px;
}
.five button {
  flex: 1;
  padding: 0 0 2px;
}
.sec {
  display: flex;
  align-items: center;
  gap: 5px;
  flex: none;
  height: 23px;
  padding-left: 11px;
}
.sec h3 {
  font-size: 11px;
  font-weight: 700;
  color: #111;
}
.sec hr {
  align-self: flex-end;
  margin-bottom: 4px;
}
.sec i {
  width: 8px;
  display: grid;
  place-items: center;
}
.sec i::before {
  content: "";
  border: 4px solid transparent;
  border-left-color: #111;
  border-right: none;
}
.sec.open i::before {
  border: 4px solid transparent;
  border-top-color: #111;
  border-bottom: none;
}
.field {
  display: flex;
  align-items: center;
  flex: none;
  padding: 9px 0 9px 27px;
  font: 11px "Liberation Sans", sans-serif;
}
.field label {
  width: 74px;
  font-family: "Open Sans", sans-serif;
  font-size: 10px;
  white-space: nowrap;
}
.field .drop {
  width: 136px;
  height: 19px;
}
.field.theme {
  padding: 10px 0 16px 27px;
}
.theme .drop {
  width: 118px;
  height: 22px;
  margin-right: 3px;
  border-color: #f6b89f;
  color: #444;
}
.field.border-type {
  padding: 11px 0 8px 27px;
}
.field.rounding {
  padding: 0 0 11px 27px;
}
.rounding label {
  font-family: "Liberation Sans", sans-serif;
}
.rounding .drop {
  height: 22px;
  border-color: #e0e0e0;
  color: #aaa;
}
.gallery {
  display: flex;
  align-items: center;
  gap: 4px;
  flex: none;
  padding-left: 13px;
}
.gallery > button {
  width: 10px;
  padding-top: 14px;
}
.styles {
  display: grid;
  grid-template-columns: repeat(3, 47px);
  gap: 21px 28px;
}
.gallery > button:last-child {
  margin-left: 3px;
}
.styles button {
  height: 34px;
  font: 10px "Liberation Sans", sans-serif;
}
.teal {
  background: #5cb8cc;
}
.silver {
  background: #c4d0d5;
}
.slate {
  background: #566874;
  color: #fff;
}
.dots {
  display: flex;
  justify-content: center;
  gap: 4px;
  flex: none;
  padding: 27px 0 13px 14px;
}
.dots i {
  width: 6px;
  height: 6px;
  border: 1px dashed #bbb;
}
.dots .now {
  background: #a0a0a0;
}
.same {
  display: grid;
  grid-template-columns: repeat(4, 37px);
  padding: 11px 0 0 18px;
  font-size: 10px;
  line-height: 12px;
}
.same button {
  display: flex;
  flex-direction: column;
  align-items: center;
  gap: 6px;
}

/* status bar */
.status {
  display: grid;
  grid-template-columns: 9fr auto 11fr;
  align-items: center;
  flex: none;
  height: 20px;
  padding: 0 8px 0 3px;
  background: #d24726;
  color: #fbe3dc;
}
.zoom {
  display: flex;
  align-items: center;
  justify-content: flex-end;
  gap: 8px;
}
.zoom .pm {
  width: 8px;
}
.zoom input {
  width: 71px;
  height: 12px;
  margin: 0 -4px;
  background: linear-gradient(#fff, #fff) center / 100% 1px no-repeat;
  appearance: none;
}
.zoom input::-webkit-slider-thumb {
  width: 3px;
  height: 10px;
  background: #fff;
  appearance: none;
}
.percent {
  margin-left: 6px;
}
```
